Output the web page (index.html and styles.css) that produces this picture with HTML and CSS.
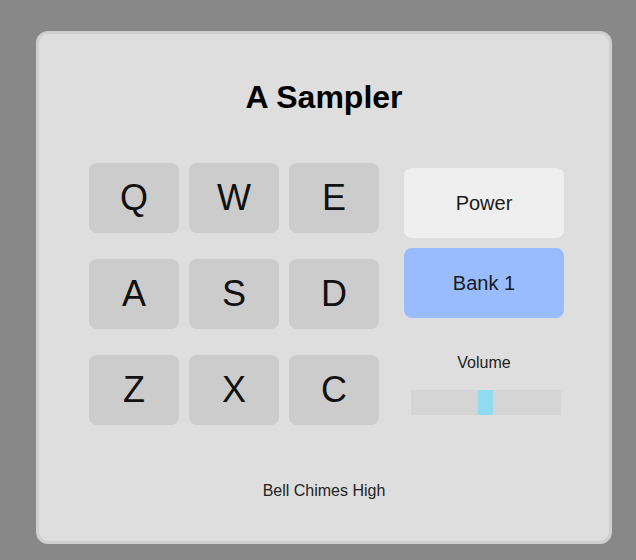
FILE: index.html
```
<!DOCTYPE html>
<html>
<head>
<meta charset="utf-8">
<link rel="stylesheet" href="styles.css">
</head>
<body>
<div class="card">
  <h1 class="title">A Sampler</h1>
  <div class="main">
    <div class="pads">
      <div class="pad">Q</div>
      <div class="pad">W</div>
      <div class="pad">E</div>
      <div class="pad">A</div>
      <div class="pad">S</div>
      <div class="pad">D</div>
      <div class="pad">Z</div>
      <div class="pad">X</div>
      <div class="pad">C</div>
    </div>
    <div class="controls">
      <div class="btn power">Power</div>
      <div class="btn bank">Bank 1</div>
      <div class="vol-label">Volume</div>
      <div class="track"><div class="thumb" style="left: 67px"></div></div>
    </div>
  </div>
  <div class="display">Bell Chimes High</div>
</div>
</body>
</html>
```
FILE: styles.css
```
html, body {
  margin: 0;
  padding: 0;
}
body {
  background: #888888;
  font-family: "Liberation Sans", Arial, sans-serif;
  width: 636px;
  height: 560px;
  overflow: hidden;
}
.card {
  box-sizing: border-box;
  margin: 31px 0 0 36px;
  width: 576px;
  height: 513px;
  background: #dedede;
  border: 3px solid #cfcfcf;
  border-radius: 12px;
  padding: 45px 0 0 50px;
}
.title {
  margin: 0 0 47px -50px;
  font-size: 32px;
  line-height: 37px;
  font-weight: bold;
  text-align: center;
  color: #000;
}
.main {
  display: flex;
  align-items: flex-start;
  gap: 25px;
}
.pads {
  display: grid;
  grid-template-columns: repeat(3, 90px);
  grid-auto-rows: 70px;
  column-gap: 10px;
  row-gap: 26px;
}
.pad {
  background: #cccccc;
  border-radius: 8px;
  display: flex;
  align-items: center;
  justify-content: center;
  font-size: 36px;
  color: #111;
}
.controls {
  width: 160px;
  margin-top: 5px;
  display: flex;
  flex-direction: column;
}
.btn {
  height: 70px;
  border-radius: 8px;
  display: flex;
  align-items: center;
  justify-content: center;
  font-size: 20px;
  color: #1a1a1a;
}
.power {
  background: #efefef;
}
.bank {
  margin-top: 10px;
  background: #99bbff;
}
.vol-label {
  margin-top: 36px;
  font-size: 16px;
  line-height: 18px;
  text-align: center;
  color: #222;
}
.track {
  position: relative;
  margin: 18px 0 0 7px;
  width: 150px;
  height: 25px;
  background: #d5d5d5;
}
.thumb {
  position: absolute;
  top: 0;
  width: 15px;
  height: 25px;
  background: #90dcf2;
}
.display {
  margin: 57px 0 0 -50px;
  font-size: 16px;
  line-height: 18px;
  text-align: center;
  color: #222;
}
```
